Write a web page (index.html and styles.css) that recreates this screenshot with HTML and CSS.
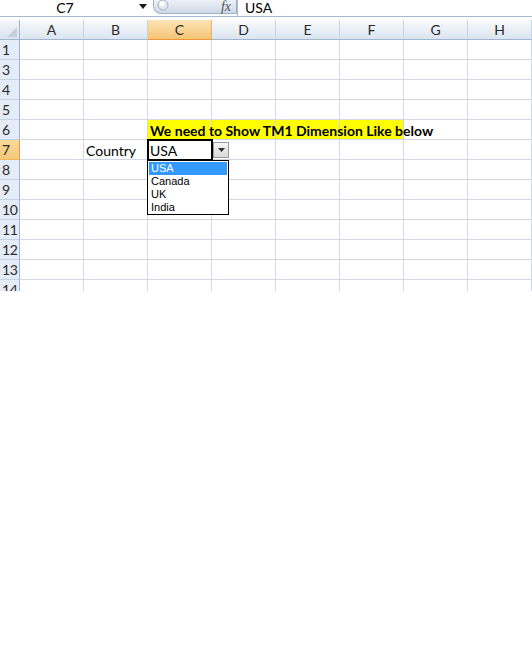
FILE: index.html
```html
<!DOCTYPE html>
<html lang="en">
<head>
    <meta charset="UTF-8">
    <meta name="viewport" content="width=device-width, initial-scale=1.0">
    <title>Sheet1 - Data Validation</title>
    <link rel="stylesheet" href="styles.css">
</head>
<body>
    <div class="formula-bar">
        <div class="name-box">
            <span class="cell-ref">C7</span>
            <svg class="name-arrow" width="8" height="5" viewBox="0 0 8 5"><path d="M0 0 H8 L4 5 Z" fill="#1a1a1a"/></svg>
        </div>
        <div class="splitter">
            <svg class="knob" width="12" height="12" viewBox="0 0 12 12">
                <circle cx="6" cy="6" r="5" fill="#e3e9f1" stroke="#9fb0c6" stroke-width="1"/>
                <circle cx="5" cy="4.5" r="2.5" fill="#ffffff"/>
            </svg>
            <span class="fx">fx</span>
        </div>
        <div class="formula">USA</div>
    </div>

    <div class="sheet">
        <div class="grid">
            <div class="corner"><svg width="10" height="10" viewBox="0 0 10 10"><path d="M10 0 V10 H0 Z" fill="#c3cfde"/></svg></div>
            <div class="col-head">A</div>
            <div class="col-head">B</div>
            <div class="col-head active">C</div>
            <div class="col-head">D</div>
            <div class="col-head">E</div>
            <div class="col-head">F</div>
            <div class="col-head">G</div>
            <div class="col-head">H</div>

            <div class="row-head">1</div>
            <div class="cell"></div><div class="cell"></div><div class="cell"></div><div class="cell"></div><div class="cell"></div><div class="cell"></div><div class="cell"></div><div class="cell"></div>

            <div class="row-head">3</div>
            <div class="cell"></div><div class="cell"></div><div class="cell"></div><div class="cell"></div><div class="cell"></div><div class="cell"></div><div class="cell"></div><div class="cell"></div>

            <div class="row-head">4</div>
            <div class="cell"></div><div class="cell"></div><div class="cell"></div><div class="cell"></div><div class="cell"></div><div class="cell"></div><div class="cell"></div><div class="cell"></div>

            <div class="row-head">5</div>
            <div class="cell"></div><div class="cell"></div><div class="cell"></div><div class="cell"></div><div class="cell"></div><div class="cell"></div><div class="cell"></div><div class="cell"></div>

            <div class="row-head">6</div>
            <div class="cell"></div><div class="cell"></div>
            <div class="cell fill"><span class="note">We need to Show TM1 Dimension Like below</span></div>
            <div class="cell fill"></div><div class="cell fill"></div><div class="cell fill"></div>
            <div class="cell"></div><div class="cell"></div>

            <div class="row-head active">7</div>
            <div class="cell"></div>
            <div class="cell">Country</div>
            <div class="cell selected">
                USA
                <div class="drop-btn"><svg width="7" height="4" viewBox="0 0 7 4"><path d="M0 0 H7 L3.5 4 Z" fill="#333"/></svg></div>
                <ul class="drop-list">
                    <li class="current">USA</li>
                    <li>Canada</li>
                    <li>UK</li>
                    <li>India</li>
                </ul>
            </div>
            <div class="cell"></div><div class="cell"></div><div class="cell"></div><div class="cell"></div><div class="cell"></div>

            <div class="row-head">8</div>
            <div class="cell"></div><div class="cell"></div><div class="cell"></div><div class="cell"></div><div class="cell"></div><div class="cell"></div><div class="cell"></div><div class="cell"></div>

            <div class="row-head">9</div>
            <div class="cell"></div><div class="cell"></div><div class="cell"></div><div class="cell"></div><div class="cell"></div><div class="cell"></div><div class="cell"></div><div class="cell"></div>

            <div class="row-head">10</div>
            <div class="cell"></div><div class="cell"></div><div class="cell"></div><div class="cell"></div><div class="cell"></div><div class="cell"></div><div class="cell"></div><div class="cell"></div>

            <div class="row-head">11</div>
            <div class="cell"></div><div class="cell"></div><div class="cell"></div><div class="cell"></div><div class="cell"></div><div class="cell"></div><div class="cell"></div><div class="cell"></div>

            <div class="row-head">12</div>
            <div class="cell"></div><div class="cell"></div><div class="cell"></div><div class="cell"></div><div class="cell"></div><div class="cell"></div><div class="cell"></div><div class="cell"></div>

            <div class="row-head">13</div>
            <div class="cell"></div><div class="cell"></div><div class="cell"></div><div class="cell"></div><div class="cell"></div><div class="cell"></div><div class="cell"></div><div class="cell"></div>

            <div class="row-head">14</div>
            <div class="cell"></div><div class="cell"></div><div class="cell"></div><div class="cell"></div><div class="cell"></div><div class="cell"></div><div class="cell"></div><div class="cell"></div>
        </div>
    </div>
</body>
</html>
```

FILE: styles.css
```css
body {
    margin: 0;
    padding: 0;
    width: 532px;
    height: 668px;
    background-color: #fff;
    font-family: 'Lato', 'Liberation Sans', sans-serif;
    font-size: 14px;
    color: #000;
    overflow: hidden;
}

/* formula bar */
.formula-bar {
    display: flex;
    align-items: flex-start;
    height: 16px;
    border-bottom: 1px solid #a7bad3;
    margin-bottom: 3px;
}

.name-box {
    width: 153px;
    display: flex;
    align-items: flex-start;
}

.cell-ref {
    width: 130px;
    text-align: center;
    line-height: 14px;
    padding-top: 1px;
}

.name-arrow {
    margin-left: 9px;
    margin-top: 4px;
}

.splitter {
    width: 84px;
    height: 14px;
    display: flex;
    align-items: center;
    justify-content: space-between;
    box-sizing: border-box;
    padding: 0 5px 0 3px;
    background: linear-gradient(#eef2f8, #cdd9e8);
    border: 1px solid #9fb1c8;
    border-top: none;
    border-radius: 0 0 0 8px;
}

.knob {
    margin-top: -3px;
}

.fx {
    font-family: 'Liberation Serif', serif;
    font-style: italic;
    font-size: 14px;
    line-height: 12px;
    color: #555;
}

.formula {
    flex: 1;
    height: 16px;
    box-sizing: border-box;
    border-left: 1px solid #a7bad3;
    padding: 1px 0 0 7px;
    line-height: 14px;
}

/* sheet grid */
.sheet {
    height: 271px;
    overflow: hidden;
}

.grid {
    display: grid;
    grid-template-columns: 20px repeat(8, 64px);
    grid-auto-rows: 20px;
}

.corner,
.col-head,
.row-head,
.cell {
    box-sizing: border-box;
}

.corner {
    background: linear-gradient(#f4f7fb, #dae3ee);
    border-right: 1px solid #9eb6ce;
    border-bottom: 1px solid #9eb6ce;
    display: flex;
    align-items: flex-end;
    justify-content: flex-end;
    padding: 0 2px 2px 0;
}

.col-head {
    background: linear-gradient(#f9fbfd 0%, #eaf0f7 50%, #dbe4ef 100%);
    border-right: 1px solid #c5d2e1;
    border-bottom: 1px solid #9eb6ce;
    text-align: center;
    line-height: 19px;
    color: #2a2a2a;
}

.col-head.active {
    background: linear-gradient(#fbe3b6 0%, #f9d597 50%, #f5c574 100%);
    border-right: 1px solid #f2b558;
    border-bottom: 1px solid #f29536;
}

.row-head {
    background-color: #e4ecf7;
    border-right: 1px solid #9eb6ce;
    border-bottom: 1px solid #c5d2e1;
    text-align: left;
    padding-left: 2px;
    line-height: 20px;
    color: #2a2a2a;
    letter-spacing: -0.3px;
}

.row-head.active {
    background: linear-gradient(#f9d89d, #f6c97a);
    border-right: 1px solid #f29536;
    border-bottom: 1px solid #f2b558;
}

.cell {
    border-right: 1px solid #d0d7e5;
    border-bottom: 1px solid #d0d7e5;
    padding-left: 2px;
    line-height: 22px;
    white-space: nowrap;
}

.cell.fill {
    background-color: #ffff00;
}

.note {
    position: relative;
    z-index: 1;
    font-weight: bold;
}

/* active cell with its validation list */
.cell.selected {
    position: relative;
    z-index: 2;
    outline: 2px solid #000;
    outline-offset: -1px;
}

.drop-btn {
    position: absolute;
    left: 65px;
    top: 2px;
    width: 16px;
    height: 16px;
    box-sizing: border-box;
    border: 1px solid #9a9a9a;
    background: linear-gradient(#f7f7f7, #d9d9d9);
    display: flex;
    align-items: center;
    justify-content: center;
}

.drop-list {
    position: absolute;
    left: -1px;
    top: 20px;
    width: 82px;
    margin: 0;
    padding: 0;
    list-style: none;
    box-sizing: border-box;
    border: 1px solid #000;
    background-color: #fff;
    font-family: 'Liberation Sans', sans-serif;
    font-size: 11px;
    line-height: 13px;
}

.drop-list li {
    padding-left: 2px;
    margin: 0 1px;
}

.drop-list li.current {
    background-color: #3399ff;
    color: #fff;
    margin-top: 1px;
}
```
